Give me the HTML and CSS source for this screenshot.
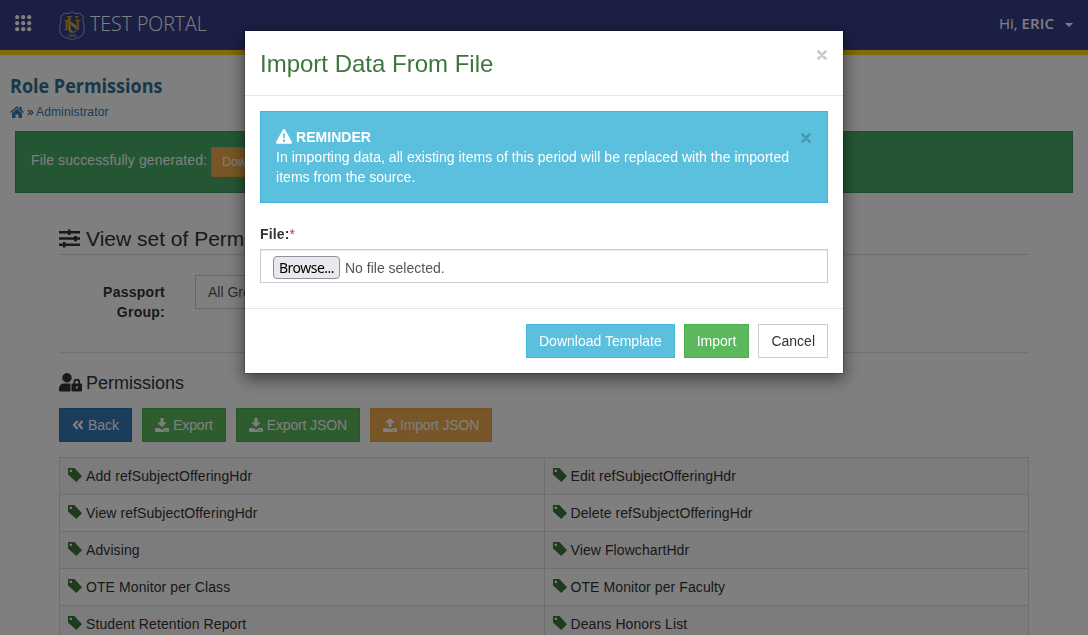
FILE: index.html
```html
<!DOCTYPE html>
<html lang="en">
<head>
  <meta charset="UTF-8">
  <title>Role Permissions</title>
  <link rel="stylesheet" href="styles.css">
</head>
<body>
  <!-- icons -->
  <svg class="sprite" width="0" height="0">
    <symbol id="tag" viewBox="0 0 14 14"><path fill-rule="evenodd" d="M0 0h6.500L14 8.200 8.300 14 0 6.500zM2.800 1.500a1.300 1.300 0 1 0 .01 0z"/></symbol>
    <symbol id="download" viewBox="0 0 14 14"><path fill-rule="evenodd" d="M5.500 0h3v4.500h3.300L7 9.300 2.200 4.500h3.300zM1 10h3.500L7 12l2.500-2H13a1 1 0 0 1 1 1V13a1 1 0 0 1-1 1H1a1 1 0 0 1-1-1v-2a1 1 0 0 1 1-1zM9 12.200h1v1H9zM11 12.200h1v1h-1z"/></symbol>
    <symbol id="upload" viewBox="0 0 14 14"><path fill-rule="evenodd" d="M5.500 9V4.800H2.200L7 0l4.800 4.800H8.500V9zM1 10h3.200v.8h5.600V10H13a1 1 0 0 1 1 1V13a1 1 0 0 1-1 1H1a1 1 0 0 1-1-1v-2a1 1 0 0 1 1-1zM9 12.200h1v1H9zM11 12.200h1v1h-1z"/></symbol>
    <symbol id="times" viewBox="0 0 10 10"><path d="M1.500 1.500l7 7M8.500 1.500l-7 7" fill="none" stroke="currentColor" stroke-width="2.800" stroke-linecap="round"/></symbol>
  </svg>

  <nav class="navbar">
    <svg class="apps" width="18" height="18" viewBox="0 0 18 18">
      <circle cx="2.200" cy="2.200" r="2.100"/><circle cx="8.200" cy="2.200" r="2.100"/><circle cx="14.200" cy="2.200" r="2.100"/>
      <circle cx="2.200" cy="8.200" r="2.100"/><circle cx="8.200" cy="8.200" r="2.100"/><circle cx="14.200" cy="8.200" r="2.100"/>
      <circle cx="2.200" cy="14.200" r="2.100"/><circle cx="8.200" cy="14.200" r="2.100"/><circle cx="14.200" cy="14.200" r="2.100"/>
    </svg>
    <svg class="logo" width="26" height="30" viewBox="0 0 26 30">
      <path d="M13 .8C10.500 2.500 7.500 3 4.800 2.200L1.800 5.500C2.800 9.500.6 13 .7 18c.1 4.500 2 7 5 8.200 2.800 1.200 5 1.400 7.300 3 2.300-1.600 4.500-1.800 7.300-3 3-1.200 4.900-3.700 5-8.200.1-5-2.100-8.500-1.100-12.500l-3-3.300C18.500 3 15.500 2.500 13 .8z" fill="none" stroke="#a3abc6" stroke-width="1"/>
      <text class="logo-n" x="4" y="18.500" textLength="18" lengthAdjust="spacingAndGlyphs">N</text>
      <text class="logo-u" x="7" y="21.500" textLength="13" lengthAdjust="spacingAndGlyphs">U</text>
      <text class="logo-year" x="13" y="26" text-anchor="middle">1900</text>
    </svg>
    <span class="brand">TEST PORTAL</span>
    <div class="user">Hi, <b>ERIC</b><span class="caret"></span></div>
  </nav>

  <header class="page-header">
    <h1>Role Permissions</h1>
    <div class="breadcrumb">
      <svg width="14" height="12" viewBox="0 0 14 12"><path d="M7 .2l2.700 2.200V.8h2v3.300L14 6l-.8 1.100L7 2.100.8 7.100 0 6zM7 3.100l5 4V12H8.500V8.500h-3V12H2V7.100z"/></svg>
      <span>»</span>
      <a href="#">Administrator</a>
    </div>
  </header>

  <div class="alert alert-success">
    File successfully generated: <a class="btn btn-warning btn-sm" href="#">Download</a>
  </div>

  <main class="content">
    <h2>
      <svg width="21" height="19" viewBox="0 0 21 19"><path d="M0 2h9V.5h2.500V2H21v2.500h-9.500V6H9V4.500H0zM0 8.300h15V7h3v1.300h3v2.500h-3v1.500h-3v-1.500H0zM0 14.500h4V13h2.500v1.500H21V17H6.500v1.500H4V17H0z"/></svg>
      View set of Permissions
    </h2>
    <div class="form-row">
      <label>Passport Group:</label>
      <div class="select">All Groups</div>
    </div>
    <h3>
      <svg width="23" height="19" viewBox="0 0 23 19"><path fill-rule="evenodd" d="M8 0a4.700 4.700 0 1 1-.01 0zM5 10.500h6.500V18.500H1.200A1.200 1.200 0 0 1 0 17.300V15.500a5 5 0 0 1 5-5zM13.500 10.500h1V9a3.300 3.300 0 0 1 6.600 0v1.500h.9a1 1 0 0 1 1 1v6a1 1 0 0 1-1 1h-8.500a1 1 0 0 1-1-1v-6a1 1 0 0 1 1-1zm2.700 0h3.200V9a1.600 1.600 0 0 0-3.200 0zM17.800 13.300a1.100 1.100 0 1 0 .01 0z"/></svg>
      Permissions
    </h3>
    <div class="toolbar">
      <a class="btn btn-primary" href="#"><svg width="12" height="10" viewBox="0 0 12 10"><path d="M5.500 1L2 5l3.500 4M10.500 1L7 5l3.500 4" fill="none" stroke="currentColor" stroke-width="2.200"/></svg>Back</a>
      <a class="btn btn-success" href="#"><svg width="14" height="14"><use href="#download"/></svg>Export</a>
      <a class="btn btn-success" href="#"><svg width="14" height="14"><use href="#download"/></svg>Export JSON</a>
      <a class="btn btn-warning" href="#"><svg width="14" height="14"><use href="#upload"/></svg>Import JSON</a>
    </div>
    <table class="table">
      <tr>
        <td><svg width="14" height="14"><use href="#tag"/></svg>Add refSubjectOfferingHdr</td>
        <td><svg width="14" height="14"><use href="#tag"/></svg>Edit refSubjectOfferingHdr</td>
      </tr>
      <tr>
        <td><svg width="14" height="14"><use href="#tag"/></svg>View refSubjectOfferingHdr</td>
        <td><svg width="14" height="14"><use href="#tag"/></svg>Delete refSubjectOfferingHdr</td>
      </tr>
      <tr>
        <td><svg width="14" height="14"><use href="#tag"/></svg>Advising</td>
        <td><svg width="14" height="14"><use href="#tag"/></svg>View FlowchartHdr</td>
      </tr>
      <tr>
        <td><svg width="14" height="14"><use href="#tag"/></svg>OTE Monitor per Class</td>
        <td><svg width="14" height="14"><use href="#tag"/></svg>OTE Monitor per Faculty</td>
      </tr>
      <tr>
        <td><svg width="14" height="14"><use href="#tag"/></svg>Student Retention Report</td>
        <td><svg width="14" height="14"><use href="#tag"/></svg>Deans Honors List</td>
      </tr>
    </table>
  </main>

  <div class="backdrop"></div>

  <div class="modal">
    <div class="modal-dialog">
      <div class="modal-header">
        <h4>Import Data From File</h4>
        <button class="close"><svg width="10" height="10"><use href="#times"/></svg></button>
      </div>
      <div class="modal-body">
        <div class="alert alert-info">
          <button class="close"><svg width="10" height="10"><use href="#times"/></svg></button>
          <div class="alert-title">
            <svg width="16" height="15" viewBox="0 0 16 15"><path fill-rule="evenodd" d="M8 0c.5 0 .9.300 1.200.7l6.600 12c.5 1-.1 2.100-1.200 2.100H1.400C.3 14.800-.3 13.700.2 12.700L6.800.7C7.100.3 7.500 0 8 0zM7 4.800l.3 4.700h1.400L9 4.800zM8 10.500a1.200 1.200 0 1 0 .01 0z"/></svg>
            <b>REMINDER</b>
          </div>
          In importing data, all existing items of this period will be replaced with the imported items from the source.
        </div>
        <label class="file-label">File:<span class="required">*</span></label>
        <div class="file-control">
          <button class="browse">Browse...</button>
          <span>No file selected.</span>
        </div>
      </div>
      <div class="modal-footer">
        <button class="btn btn-info">Download Template</button>
        <button class="btn btn-success">Import</button>
        <button class="btn btn-default">Cancel</button>
      </div>
    </div>
  </div>
</body>
</html>
```
FILE: styles.css
```css
* {
  box-sizing: border-box;
}
body {
  margin: 0;
  height: 635px;
  overflow: hidden;
  background-color: #fff;
  color: #333;
  font-family: "Liberation Sans", Arial, sans-serif;
  font-size: 14px;
  line-height: 20px;
}
svg {
  fill: currentColor;
}
.sprite {
  display: block;
}
a {
  color: #337ab7;
  text-decoration: none;
}

/* top bar */
.navbar {
  display: flex;
  align-items: center;
  height: 55px;
  padding: 0 15px;
  background-color: #363f88;
  border-bottom: 5px solid #ffd712;
  color: #fff;
  font-family: "Open Sans", sans-serif;
}
.apps {
  margin-top: -3px;
}
.logo {
  margin-left: 26px;
  margin-top: 1px;
}
.logo-n {
  fill: #d3b233;
  font: bold 15px "Liberation Serif", serif;
}
.logo-u {
  fill: #d3b233;
  stroke: #363f88;
  stroke-width: 0.5px;
  font: bold 25px "Liberation Serif", serif;
}
.logo-year {
  fill: #a3abc6;
  font: bold 4px "Liberation Sans", sans-serif;
}
.brand {
  margin: -3px 0 0 5px;
  font-size: 20px;
  font-weight: 300;
  transform: scaleX(0.975);
  transform-origin: left;
}
.user {
  display: flex;
  align-items: center;
  margin-left: auto;
  margin-top: -4px;
  font-size: 15px;
  white-space: pre;
}
.user b {
  font-weight: 600;
  letter-spacing: 0.1px;
}
.caret {
  margin: 3px 0 0 11px;
  border: 4px solid transparent;
  border-top-color: #fff;
  border-bottom: 0;
}

.page-header {
  padding: 20px 10px 0;
}
.page-header h1 {
  margin: 0;
  color: #31708f;
  font-family: "Open Sans", sans-serif;
  font-size: 20px;
  font-weight: 700;
  line-height: 22px;
  transform: scaleX(0.9);
  transform-origin: left;
}
.breadcrumb {
  display: flex;
  align-items: center;
  gap: 3px;
  margin-top: 5px;
  font-size: 12px;
}
.breadcrumb span {
  width: 6px;
}
.breadcrumb a {
  letter-spacing: 0.15px;
}
.breadcrumb svg {
  margin-top: -1px;
  color: #337ab7;
}

.alert {
  padding: 15px;
  border: 1px solid;
  color: #fff;
  letter-spacing: 0.04px;
}
.alert-success {
  display: flex;
  gap: 4px;
  margin: 9px 15px 0;
  height: 62px;
  background-color: #48ac68;
  border-color: #3c9a5a;
  line-height: 27px;
  letter-spacing: 0.12px;
}
.btn {
  display: inline-flex;
  align-items: center;
  gap: 4px;
  height: 34px;
  padding: 0 12px;
  border: 1px solid;
  color: #fff;
  font: 14px "Liberation Sans", Arial, sans-serif;
}
.btn-sm {
  height: 30px;
  padding: 0 10px;
  font-size: 12px;
}
.btn-primary {
  background-color: #337ab7;
  border-color: #2e6da4;
}
.btn-success {
  background-color: #5cb85c;
  border-color: #4cae4c;
}
.btn-warning {
  background-color: #f0ad4e;
  border-color: #eea236;
}
.btn-info {
  background-color: #5bc0de;
  border-color: #46b8da;
}
.btn-default {
  background-color: #fff;
  border-color: #ccc;
  color: #333;
}

.content {
  padding: 30px 59px 0;
}
.content h2,
.content h3 {
  display: flex;
  align-items: center;
  margin: 0;
  font-weight: normal;
}
.content h2 {
  gap: 6px;
  height: 32px;
  border-bottom: 1px solid #ddd;
  font-size: 21px;
}
.content h2 svg {
  margin-top: -1px;
}
.content h3 {
  gap: 4px;
  height: 20px;
  margin-top: 20px;
  font-size: 18px;
}
.content h3 svg {
  margin-top: -2px;
}
.form-row {
  display: flex;
  gap: 30px;
  height: 98px;
  padding-top: 20px;
  border-bottom: 1px solid #e2e2e2;
}
.form-row label {
  width: 106px;
  padding: 7px 0 0 30px;
  font-weight: bold;
  letter-spacing: 0.25px;
  text-align: right;
}
.select {
  width: 400px;
  height: 34px;
  padding: 6px 12px;
  border: 1px solid #ccc;
  color: #555;
}
.toolbar {
  display: flex;
  gap: 10px;
  margin: 15px 0;
}
.toolbar .btn {
  letter-spacing: -0.14px;
}
.toolbar .btn-primary {
  letter-spacing: 0;
}
.toolbar .btn-warning {
  gap: 3px;
}

.table {
  width: 970px;
  border-collapse: collapse;
  table-layout: fixed;
}
.table td {
  height: 37px;
  padding: 8px;
  border: 1px solid #ddd;
  letter-spacing: 0.09px;
}
.table tr:nth-child(odd) {
  background-color: #f9f9f9;
}
.table svg {
  margin: 0 4px -1px 0;
  color: #3c763d;
}

/* import dialog */
.backdrop {
  position: fixed;
  inset: 0;
  background-color: rgba(0, 0, 0, 0.5);
}
.modal {
  position: fixed;
  inset: 0;
}
.modal-dialog {
  width: 600px;
  margin: 30px auto;
  background-color: #fff;
  background-clip: padding-box;
  border: 1px solid rgba(0, 0, 0, 0.2);
  box-shadow: 0 5px 15px rgba(0, 0, 0, 0.5);
}
.modal-header {
  display: flex;
  justify-content: space-between;
  height: 65px;
  padding: 15px;
  border-bottom: 1px solid #e5e5e5;
}
.modal-header h4 {
  margin: 0;
  color: #3c763d;
  font-size: 24px;
  font-weight: normal;
  line-height: 35px;
}
.close {
  height: 10px;
  padding: 0;
  border: 0;
  background: none;
  color: #000;
  line-height: 0;
  opacity: 0.2;
}
.modal-header .close {
  margin: 4px 1px 0 0;
}
.modal-body {
  padding: 15px 15px 25px;
}
.alert-info {
  height: 92px;
  background-color: #5bc0de;
  border-color: #3db5d8;
}
.alert-info .close {
  float: right;
  margin: 6px 1px 0 0;
}
.alert-title {
  display: flex;
  align-items: center;
  gap: 4px;
}
.alert-title svg {
  margin-top: -1px;
}
.file-label {
  display: block;
  margin: 21px 0 5px;
  font-weight: bold;
  letter-spacing: 0.15px;
}
.required {
  color: #a94442;
  font-weight: normal;
}
.file-control {
  display: flex;
  align-items: center;
  gap: 5px;
  height: 34px;
  padding: 3px 12px 0;
  border: 1px solid #ccc;
  box-shadow: inset 0 1px 1px rgba(0, 0, 0, 0.075);
  color: #555;
}
.browse {
  width: 67px;
  height: 23px;
  padding: 0;
  border: 1px solid #8f8f9d;
  border-radius: 4px;
  background-color: #e9e9ed;
  color: #000;
  font: 14px "Noto Sans", sans-serif;
  letter-spacing: -0.5px;
}
.modal-footer {
  display: flex;
  justify-content: flex-end;
  gap: 9px;
  padding: 15px;
  border-top: 1px solid #e5e5e5;
}
```
